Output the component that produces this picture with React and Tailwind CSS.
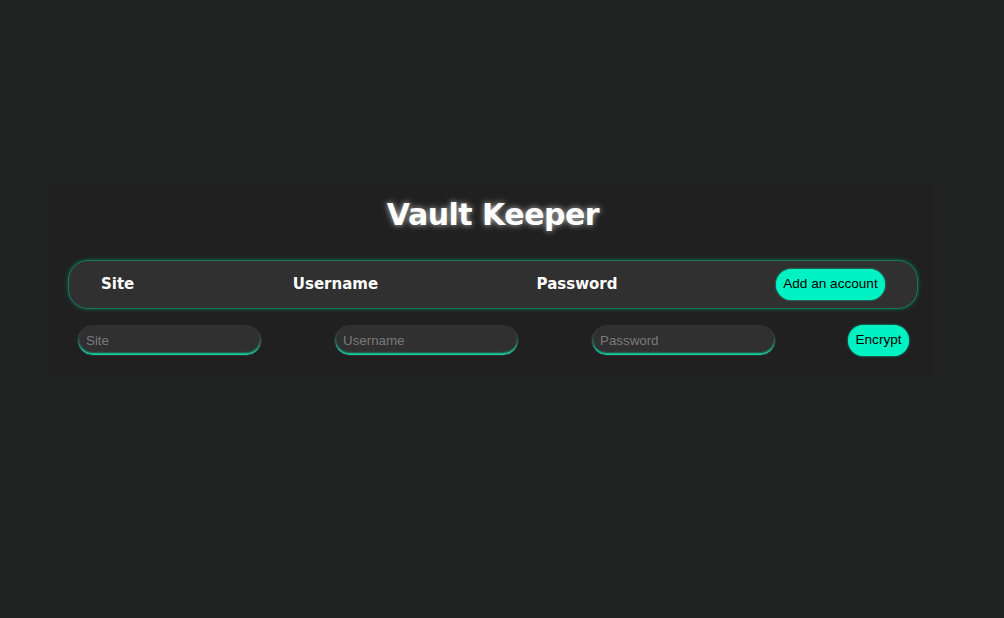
import React, { useState } from 'react';

export default function App() {
    return (
        <div className="min-h-screen w-full bg-[#1f2221] pt-[184px] pl-[52px]">
            <Vault />
        </div>
    );
}

function Vault() {
    const [form, setForm] = useState({ site: '', username: '', password: '' });

    const update = (key) => (e) => setForm(prev => ({ ...prev, [key]: e.target.value }));

    const inputCls = "w-[185px] h-[31px] rounded-full bg-[#303030] border border-[#2c3431] px-2 text-[13.33px] text-[#ddd] placeholder:text-[#7a7a7a] font-['Liberation_Sans',Arial,sans-serif] outline-none shadow-[inset_0_-2px_2px_#12d6a6]";

    return (
        <div className="w-[882px] h-[193px] bg-[#202020] px-4 pt-[11px]">
            <h1 className="text-center text-white font-bold text-[30px] leading-[40px] font-['DejaVu_Sans',sans-serif] tracking-[-0.5px] [text-shadow:0_0_6px_rgba(255,255,255,0.7)]">
                Vault Keeper
            </h1>

            <div className="mt-[25px] h-[49px] rounded-[20px] bg-[#303030] border border-[#16795f] shadow-[0_0_4px_#0e6b52] flex items-center justify-between pl-[32px] pr-[32px]">
                <span className="text-white font-bold text-[15px] font-['DejaVu_Sans',sans-serif]">Site</span>
                <span className="text-white font-bold text-[15px] font-['DejaVu_Sans',sans-serif]">Username</span>
                <span className="text-white font-bold text-[15px] font-['DejaVu_Sans',sans-serif]">Password</span>
                <button className="h-[31px] w-[109px] rounded-full bg-[#00f2c3] text-black text-[13.6px] font-['Liberation_Sans',Arial,sans-serif] shadow-[0_0_2px_#00f2c3]">
                    Add an account
                </button>
            </div>

            <div className="mt-[16px] flex items-center gap-[72px] pl-[9px]">
                <input className={inputCls} placeholder="Site" value={form.site} onChange={update('site')} />
                <input className={inputCls} placeholder="Username" value={form.username} onChange={update('username')} />
                <input className={inputCls} placeholder="Password" type="password" value={form.password} onChange={update('password')} />
                <button className="h-[31px] w-[61px] rounded-full bg-[#00f2c3] text-black text-[13.6px] font-['Liberation_Sans',Arial,sans-serif] shadow-[0_0_2px_#00f2c3]">
                    Encrypt
                </button>
            </div>
        </div>
    );
}
